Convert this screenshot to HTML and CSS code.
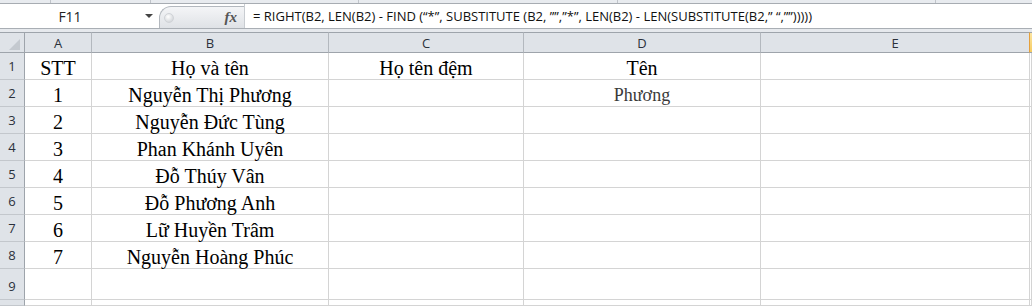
FILE: index.html
```html
<!DOCTYPE html>
<html lang="vi">
<head>
  <meta charset="UTF-8">
  <title>Tách họ tên</title>
  <link rel="stylesheet" href="styles.css">
</head>
<body>

  <div class="ribbon-edge">
    <span class="seg seg-1"></span>
    <span class="seg seg-2"></span>
    <span class="seg seg-3"></span>
    <span class="seg seg-4"></span>
    <span class="seg seg-5"></span>
    <span class="seg seg-last"></span>
  </div>

  <div class="formula-bar">
    <div class="name-box">
      <span class="name">F11</span>
      <span class="caret"></span>
    </div>
    <div class="fx-zone">
      <span class="grip"></span>
      <span class="fx">fx</span>
    </div>
    <div class="formula">= RIGHT(B2, LEN(B2) - FIND (“*”, SUBSTITUTE (B2, ””,”*”, LEN(B2) - LEN(SUBSTITUTE(B2,” “,””)))))</div>
  </div>

  <div class="bar-gap"></div>

  <div class="sheet">
    <!-- column headers -->
    <div class="corner"><span class="corner-mark"></span></div>
    <div class="col-head">A</div>
    <div class="col-head">B</div>
    <div class="col-head">C</div>
    <div class="col-head">D</div>
    <div class="col-head col-e">E</div>
    <div class="col-head col-f"></div>

    <div class="row-head">1</div>
    <div class="cell">STT</div>
    <div class="cell">Họ và tên</div>
    <div class="cell">Họ tên đệm</div>
    <div class="cell">Tên</div>
    <div class="cell"></div>
    <div class="cell"></div>

    <div class="row-head">2</div>
    <div class="cell">1</div>
    <div class="cell">Nguyễn Thị Phương</div>
    <div class="cell"></div>
    <div class="cell result">Phương</div>
    <div class="cell"></div>
    <div class="cell"></div>

    <div class="row-head">3</div>
    <div class="cell">2</div>
    <div class="cell">Nguyễn Đức Tùng</div>
    <div class="cell"></div>
    <div class="cell"></div>
    <div class="cell"></div>
    <div class="cell"></div>

    <div class="row-head">4</div>
    <div class="cell">3</div>
    <div class="cell">Phan Khánh Uyên</div>
    <div class="cell"></div>
    <div class="cell"></div>
    <div class="cell"></div>
    <div class="cell"></div>

    <div class="row-head">5</div>
    <div class="cell">4</div>
    <div class="cell">Đỗ Thúy Vân</div>
    <div class="cell"></div>
    <div class="cell"></div>
    <div class="cell"></div>
    <div class="cell"></div>

    <div class="row-head">6</div>
    <div class="cell">5</div>
    <div class="cell">Đỗ Phương Anh</div>
    <div class="cell"></div>
    <div class="cell"></div>
    <div class="cell"></div>
    <div class="cell"></div>

    <div class="row-head">7</div>
    <div class="cell">6</div>
    <div class="cell">Lữ Huyền Trâm</div>
    <div class="cell"></div>
    <div class="cell"></div>
    <div class="cell"></div>
    <div class="cell"></div>

    <div class="row-head">8</div>
    <div class="cell">7</div>
    <div class="cell">Nguyễn Hoàng Phúc</div>
    <div class="cell"></div>
    <div class="cell"></div>
    <div class="cell"></div>
    <div class="cell"></div>

    <div class="row-head">9</div>
    <div class="cell"></div>
    <div class="cell"></div>
    <div class="cell"></div>
    <div class="cell"></div>
    <div class="cell"></div>
    <div class="cell"></div>

    <div class="row-head"></div>
    <div class="cell"></div>
    <div class="cell"></div>
    <div class="cell"></div>
    <div class="cell"></div>
    <div class="cell"></div>
    <div class="cell"></div>
  </div>

</body>
</html>
```

FILE: styles.css
```css
* {
  box-sizing: border-box;
}
body {
  margin: 0;
  width: 1032px;
  height: 306px;
  overflow: hidden;
  background-color: #fff;
  font-family: 'Open Sans', 'Noto Sans', sans-serif;
}

/* bottom edge of the ribbon */
.ribbon-edge {
  display: flex;
  height: 4px;
  background-color: #e8ebef;
  border-bottom: 1px solid #a7acb2;
}
.seg {
  border-right: 1px solid #c0c4ca;
}
.seg-1 { width: 51px; }
.seg-2 { width: 100px; }
.seg-3 { width: 208px; }
.seg-4 { width: 259px; }
.seg-5 { width: 318px; }
.seg-last { flex: 1; border-right: none; }

/* name box + formula */
.formula-bar {
  display: flex;
  height: 25px;
  border-bottom: 1px solid #a9aeb4;
  background-color: #fff;
}
.name-box {
  display: flex;
  align-items: center;
  width: 159px;
}
.name {
  width: 140px;
  text-align: center;
  font-size: 14px;
  color: #222;
}
.caret {
  width: 0;
  height: 0;
  margin-left: 5px;
  border-left: 4px solid transparent;
  border-right: 4px solid transparent;
  border-top: 4px solid #444;
}
.fx-zone {
  display: flex;
  align-items: center;
  justify-content: space-between;
  width: 85px;
  margin: 2px 0 0;
  padding: 0 7px 0 4px;
  background: linear-gradient(#f4f5f7, #dfe2e6);
  border: 1px solid #b3b8be;
  border-right: none;
  border-bottom: none;
  border-radius: 12px 0 0 0;
}
.grip {
  width: 10px;
  height: 10px;
  border-radius: 50%;
  background: radial-gradient(circle at 40% 35%, #fff, #c7cbd0);
  border: 1px solid #d0d3d7;
}
.fx {
  font-family: 'Liberation Serif', serif;
  font-style: italic;
  font-weight: bold;
  font-size: 15px;
  color: #555;
}
.formula {
  flex: 1;
  display: flex;
  align-items: center;
  padding-left: 8px;
  border-left: 1px solid #c8ccd1;
  font-size: 13px;
  color: #111;
  white-space: nowrap;
}
.bar-gap {
  height: 3px;
  background-color: #e6e9ed;
}

/* worksheet grid */
.sheet {
  display: grid;
  grid-template-columns: 25px 67px 237px 195px 237px 269px 1fr;
  grid-template-rows: 21px repeat(8, 27px) 31px 1fr;
  height: 274px;
}
.corner,
.col-head {
  background-color: #dfe3e8;
  border-top: 1px solid #9ea4ab;
  border-bottom: 1px solid #9ea4ab;
  border-right: 1px solid #b3b8be;
}
.corner {
  display: flex;
  align-items: flex-end;
  justify-content: flex-end;
  padding: 0 4px 2px 0;
  border-right-color: #9ea4ab;
}
.corner-mark {
  width: 11px;
  height: 11px;
  background-color: #c4c9cf;
  clip-path: polygon(100% 0, 100% 100%, 0 100%);
}
.col-head {
  display: flex;
  align-items: center;
  justify-content: center;
  font-size: 13px;
  color: #2b313b;
}
.col-e {
  border-right-color: #e5a03c;
}
.col-f {
  background: linear-gradient(#fbe4a2, #f6cc62);
  border-right: none;
}
.row-head {
  display: flex;
  align-items: flex-end;
  justify-content: center;
  padding-bottom: 4px;
  background-color: #dfe3e8;
  border-right: 1px solid #9ea4ab;
  border-bottom: 1px solid #c3c7cc;
  font-size: 13px;
  color: #2b313b;
}
.cell {
  display: flex;
  align-items: flex-end;
  justify-content: center;
  padding-bottom: 1px;
  border-right: 1px solid #d4d4d4;
  border-bottom: 1px solid #d4d4d4;
  font-family: 'Liberation Serif', 'Times New Roman', serif;
  font-size: 20px;
  line-height: 20px;
  color: #000;
  white-space: nowrap;
}
.result {
  font-size: 18px;
  color: #3a3a3a;
}
```
